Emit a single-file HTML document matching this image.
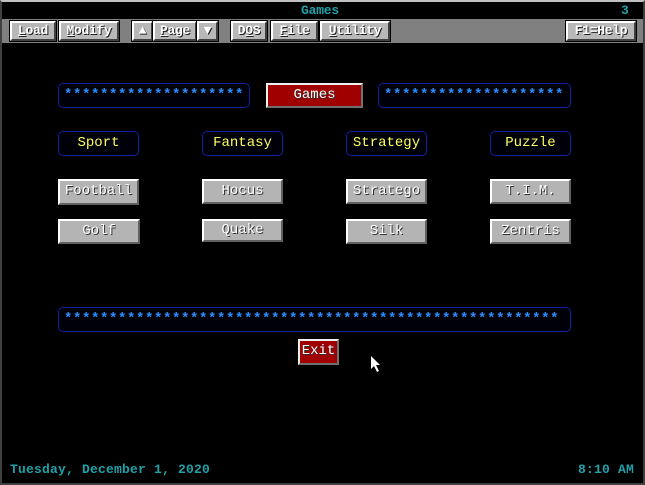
<!DOCTYPE html>
<html><head><meta charset="utf-8"><style>
*{margin:0;padding:0;box-sizing:border-box}
body{width:645px;height:485px;background:#000;overflow:hidden;position:relative;font-family:"Liberation Mono","DejaVu Sans Mono",monospace}
.frame{position:absolute;left:0;top:0;width:645px;height:485px;border:2px solid #404040;border-top:2px solid #c0c0c0}
.a{position:absolute}
.tb{position:absolute;left:2px;top:19px;width:641px;height:24px;background:#808080}
.tbtn{position:absolute;top:21px;height:20px;background:#b8b8b8;border:2px solid #fff;border-right-color:#404040;border-bottom-color:#404040;outline:1px solid #000;color:#fff;font-weight:bold;font-size:13px;letter-spacing:-0.3px;line-height:16px;text-align:center;text-shadow:1px 1px 0 #202020}
.tbtn u{text-decoration:underline}
.box{position:absolute;border:1px solid #1020a0;border-radius:5px;background:#000008;color:#ffff60;font-size:14px;text-align:center;line-height:22px}
.stars{color:#3090ff;font-size:14px;letter-spacing:0.6px;line-height:23px;font-weight:bold;text-align:left;padding-left:5px;white-space:nowrap;overflow:hidden}
.btn{position:absolute;background:#b4b4b4;border:2px solid #fff;border-right-color:#606060;border-bottom-color:#606060;color:#fff;font-size:14px;text-align:center;line-height:20px;text-shadow:1px 1px 0 #303030}
.red{background:#a00000;border-color:#f0f0f0 #707070 #707070 #f0f0f0}
.cy{color:#20a0a8;font-weight:bold;font-size:13px;letter-spacing:0.2px}
</style></head><body>
<div class="frame"></div>
<div class="a cy" style="left:301px;top:3px;letter-spacing:-0.2px">Games</div>
<div class="a cy" style="left:621px;top:3px">3</div>
<div class="tb"></div>
<div class="tbtn" style="left:10px;width:46px"><u>L</u>oad</div>
<div class="tbtn" style="left:59px;width:60px"><u>M</u>odify</div>
<div class="tbtn" style="left:132px;width:21px">▲</div>
<div class="tbtn" style="left:153px;width:44px"><u>P</u>age</div>
<div class="tbtn" style="left:197px;width:21px">▼</div>
<div class="tbtn" style="left:231px;width:36px">D<u>O</u>S</div>
<div class="tbtn" style="left:271px;width:47px"><u>F</u>ile</div>
<div class="tbtn" style="left:320px;width:70px"><u>U</u>tility</div>
<div class="tbtn" style="left:566px;width:70px">F1=Help</div>

<div class="box stars" style="left:58px;top:83px;width:192px;height:25px">********************</div>
<div class="btn red" style="left:266px;top:83px;width:97px;height:25px">Games</div>
<div class="box stars" style="left:378px;top:83px;width:193px;height:25px">********************</div>

<div class="box" style="left:58px;top:131px;width:81px;height:25px">Sport</div>
<div class="box" style="left:202px;top:131px;width:81px;height:25px">Fantasy</div>
<div class="box" style="left:346px;top:131px;width:81px;height:25px">Strategy</div>
<div class="box" style="left:490px;top:131px;width:81px;height:25px">Puzzle</div>

<div class="btn" style="left:58px;top:179px;width:81px;height:26px">Football</div>
<div class="btn" style="left:202px;top:179px;width:81px;height:25px">Hocus</div>
<div class="btn" style="left:346px;top:179px;width:81px;height:25px">Stratego</div>
<div class="btn" style="left:490px;top:179px;width:81px;height:25px">T.I.M.</div>

<div class="btn" style="left:58px;top:219px;width:82px;height:25px">Golf</div>
<div class="btn" style="left:202px;top:219px;width:81px;height:23px;line-height:18px">Quake</div>
<div class="btn" style="left:346px;top:219px;width:81px;height:25px">Silk</div>
<div class="btn" style="left:490px;top:219px;width:81px;height:25px">Zentris</div>

<div class="box stars" style="left:58px;top:307px;width:513px;height:25px">*******************************************************</div>
<div class="btn red" style="left:298px;top:339px;width:41px;height:26px">Exit</div>

<svg class="a" style="left:370px;top:355px" width="12" height="18" viewBox="0 0 12 18"><path d="M1 1 L1 14 L4 11 L7 17 L9 16 L6 10 L10 10 Z" fill="#fff"/></svg>

<div class="a cy" style="left:10px;top:462px">Tuesday, December 1, 2020</div>
<div class="a cy" style="left:578px;top:462px">8:10 AM</div>
</body></html>
